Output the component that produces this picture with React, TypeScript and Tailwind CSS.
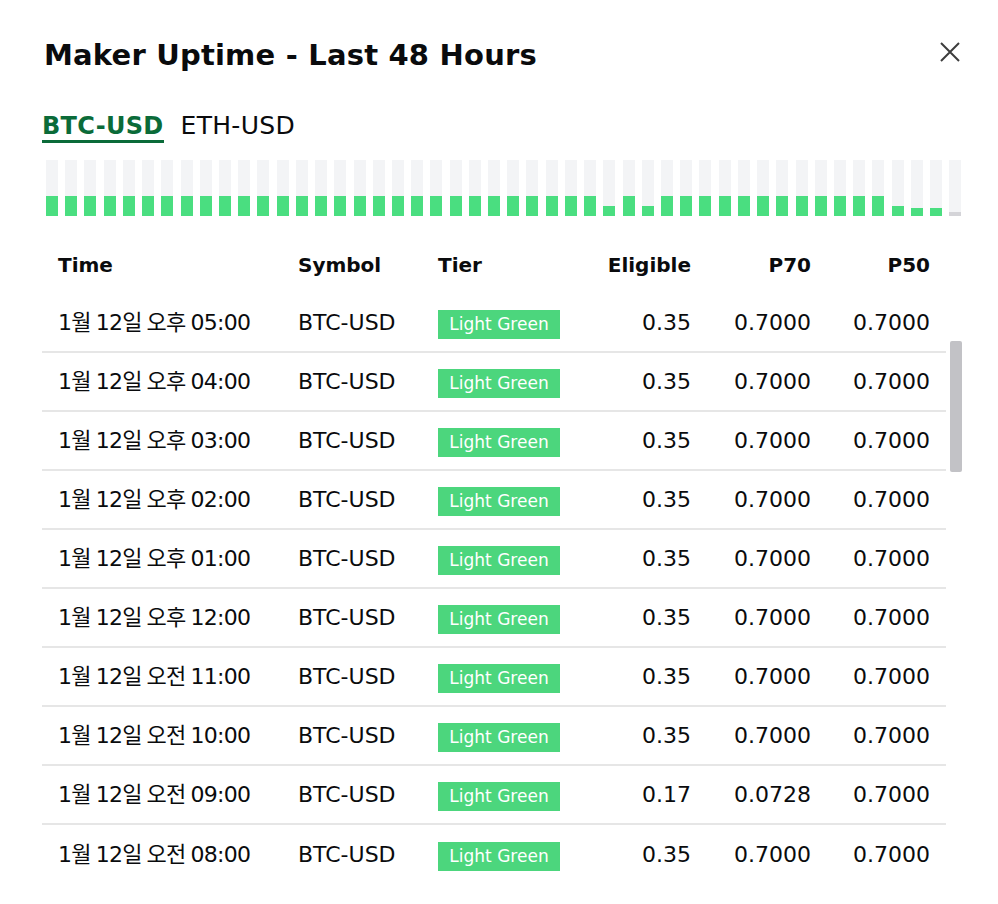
import { type FC } from 'react';

type Row = {
  time: string;
  symbol: string;
  tier: string;
  eligible: string;
  p70: string;
  p50: string;
};

const rows: Row[] = [
  { time: '1월 12일 오후 05:00', symbol: 'BTC-USD', tier: 'Light Green', eligible: '0.35', p70: '0.7000', p50: '0.7000' },
  { time: '1월 12일 오후 04:00', symbol: 'BTC-USD', tier: 'Light Green', eligible: '0.35', p70: '0.7000', p50: '0.7000' },
  { time: '1월 12일 오후 03:00', symbol: 'BTC-USD', tier: 'Light Green', eligible: '0.35', p70: '0.7000', p50: '0.7000' },
  { time: '1월 12일 오후 02:00', symbol: 'BTC-USD', tier: 'Light Green', eligible: '0.35', p70: '0.7000', p50: '0.7000' },
  { time: '1월 12일 오후 01:00', symbol: 'BTC-USD', tier: 'Light Green', eligible: '0.35', p70: '0.7000', p50: '0.7000' },
  { time: '1월 12일 오후 12:00', symbol: 'BTC-USD', tier: 'Light Green', eligible: '0.35', p70: '0.7000', p50: '0.7000' },
  { time: '1월 12일 오전 11:00', symbol: 'BTC-USD', tier: 'Light Green', eligible: '0.35', p70: '0.7000', p50: '0.7000' },
  { time: '1월 12일 오전 10:00', symbol: 'BTC-USD', tier: 'Light Green', eligible: '0.35', p70: '0.7000', p50: '0.7000' },
  { time: '1월 12일 오전 09:00', symbol: 'BTC-USD', tier: 'Light Green', eligible: '0.17', p70: '0.0728', p50: '0.7000' },
  { time: '1월 12일 오전 08:00', symbol: 'BTC-USD', tier: 'Light Green', eligible: '0.35', p70: '0.7000', p50: '0.7000' },
];

// green part of each hourly bar, in px (bar is 56px tall)
const bars: number[] = Array.from({ length: 48 }, (_, i) => {
  if (i === 29 || i === 31 || i === 44) return 10;
  if (i === 45 || i === 46) return 8;
  if (i === 47) return 4;
  return 20;
});

const gridCols = 'grid grid-cols-[240px_140px_133px_120px_120px_119px] px-4';

const UptimeBars: FC = () => (
  <div className="ml-[46px] mt-[17px] flex h-[56px] w-[916px] justify-between">
    {bars.map((h, i) => (
      <div key={i} className="flex h-full w-[12px] flex-col justify-end bg-[#f3f4f6]">
        <div
          className={i === 47 ? 'bg-[#d4d4d8]' : 'bg-[#4ade80]'}
          style={{ height: h }}
        />
      </div>
    ))}
  </div>
);

const App: FC = () => {
  return (
    <div
      className="relative h-[904px] w-[998px] overflow-hidden bg-white text-[#0a0b0d]"
      style={{ fontFamily: '"DejaVu Sans", "Noto Sans CJK KR", sans-serif' }}
    >
      <div className="flex items-start justify-between pl-[44px] pr-[38px] pt-[38px]">
        <h2 className="text-[29px] font-bold leading-[34px] tracking-[0.2px]">Maker Uptime - Last 48 Hours</h2>
        <button className="mt-[4px] text-[#3d3d3d]" aria-label="Close">
          <svg width="20" height="20" viewBox="0 0 20 20" fill="none" stroke="currentColor" strokeWidth="2">
            <path d="M1 1L19 19M19 1L1 19" />
          </svg>
        </button>
      </div>

      <div className="ml-[42px] mt-[40px] flex gap-[17px]">
        <div className="flex flex-col">
          <span className="text-[24px] font-bold leading-[28px] tracking-[0.3px] text-[#0b6b39]">BTC-USD</span>
          <div className="h-[3px] bg-[#0b6b39]" />
        </div>
        <span className="text-[25px] leading-[28px] tracking-[0.3px]">ETH-USD</span>
      </div>

      <UptimeBars />

      <div className="ml-[42px] mt-[19px] w-[904px]">
        <div className={`${gridCols} h-[59px] items-center text-[20px] font-bold`}>
          <div>Time</div>
          <div>Symbol</div>
          <div>Tier</div>
          <div className="text-right">Eligible</div>
          <div className="text-right">P70</div>
          <div className="text-right">P50</div>
        </div>
        {rows.map((r, i) => (
          <div
            key={i}
            className={`${gridCols} h-[59px] items-center text-[22px] ${
              i < rows.length - 1 ? 'border-b-2 border-[#e6e6e6]' : ''
            }`}
          >
            <div className="tracking-[-0.7px] [word-spacing:-1.5px]">{r.time}</div>
            <div>{r.symbol}</div>
            <div>
              <span className="inline-flex h-[29px] w-[122px] items-center justify-center bg-[#4cd67d] text-[17px] text-white">
                {r.tier}
              </span>
            </div>
            <div className="text-right">{r.eligible}</div>
            <div className="text-right">{r.p70}</div>
            <div className="text-right">{r.p50}</div>
          </div>
        ))}
      </div>

      <div className="absolute left-[950px] top-[341px] h-[131px] w-[12px] rounded-[2px] bg-[#c2c2c6]" />
    </div>
  );
};

export default App;
